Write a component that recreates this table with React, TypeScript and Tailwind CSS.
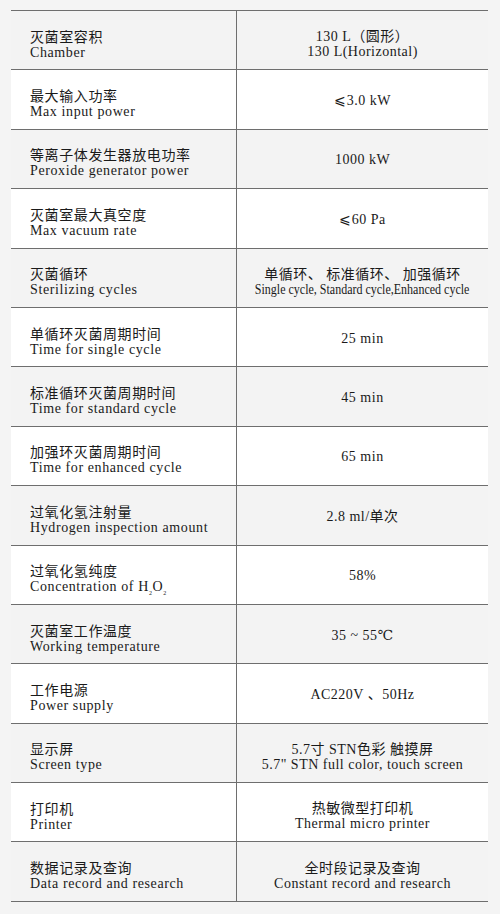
import React from "react";

type Row = { zh: string; en: React.ReactNode; v1: React.ReactNode; v2?: React.ReactNode; narrow?: boolean };

const rows: Row[] = [
  { zh: "灭菌室容积", en: "Chamber", v1: "130 L（圆形）", v2: "130 L(Horizontal)" },
  { zh: "最大输入功率", en: "Max input power", v1: "⩽3.0 kW" },
  { zh: "等离子体发生器放电功率", en: "Peroxide generator power", v1: "1000 kW" },
  { zh: "灭菌室最大真空度", en: "Max vacuum rate", v1: "⩽60 Pa" },
  {
    zh: "灭菌循环",
    en: "Sterilizing cycles",
    v1: "单循环、 标准循环、 加强循环",
    v2: "Single cycle, Standard cycle,Enhanced cycle",
    narrow: true,
  },
  { zh: "单循环灭菌周期时间", en: "Time for single cycle", v1: "25 min" },
  { zh: "标准循环灭菌周期时间", en: "Time for standard cycle", v1: "45 min" },
  { zh: "加强环灭菌周期时间", en: "Time for enhanced cycle", v1: "65 min" },
  { zh: "过氧化氢注射量", en: "Hydrogen inspection amount", v1: "2.8 ml/单次" },
  {
    zh: "过氧化氢纯度",
    en: (
      <>
        Concentration of H<sub className="text-[6px] align-[-2px]">2</sub>O<sub className="text-[6px] align-[-2px]">2</sub>
      </>
    ),
    v1: "58%",
  },
  { zh: "灭菌室工作温度", en: "Working temperature", v1: "35 ~ 55℃" },
  { zh: "工作电源", en: "Power supply", v1: "AC220V 、50Hz" },
  { zh: "显示屏", en: "Screen type", v1: "5.7寸 STN色彩 触摸屏", v2: "5.7\" STN full color, touch screen" },
  { zh: "打印机", en: "Printer", v1: "热敏微型打印机", v2: "Thermal micro printer" },
  { zh: "数据记录及查询", en: "Data record and research", v1: "全时段记录及查询", v2: "Constant record and research" },
];

export default function App() {
  return (
    <div
      className="w-[500px] h-[914px] bg-[#f4f4f4] pt-[10px] pl-[11px] pr-[12px] text-[#1a1a1a] overflow-hidden"
      style={{ fontFamily: '"Liberation Serif", "DejaVu Serif", "Noto Sans CJK SC", serif' }}
    >
      <div className="border-t border-[#6e6e6e]">
        {rows.map((r, i) => (
          <div
            key={i}
            className={`grid grid-cols-[226px_251px] h-[59.4px] border-b border-[#6e6e6e] ${
              i % 2 === 0 ? "bg-[#f3f3f3]" : "bg-white"
            }`}
          >
            <div className="border-r border-[#6e6e6e] pl-[19px] pt-[9px] flex flex-col justify-center text-[14px] leading-[15px] tracking-[0.6px]">
              <div>{r.zh}</div>
              <div>{r.en}</div>
            </div>
            <div
              className={`flex flex-col justify-center items-center text-[14px] leading-[15px] tracking-[0.5px] ${
                r.v2 ? "pt-[8px]" : "pt-[2px]"
              }`}
            >
              <div>{r.v1}</div>
              {r.v2 &&
                (r.narrow ? (
                  <div className="whitespace-nowrap text-[15px] tracking-normal scale-x-[0.8]">{r.v2}</div>
                ) : (
                  <div className="whitespace-nowrap">{r.v2}</div>
                ))}
            </div>
          </div>
        ))}
      </div>
    </div>
  );
}
